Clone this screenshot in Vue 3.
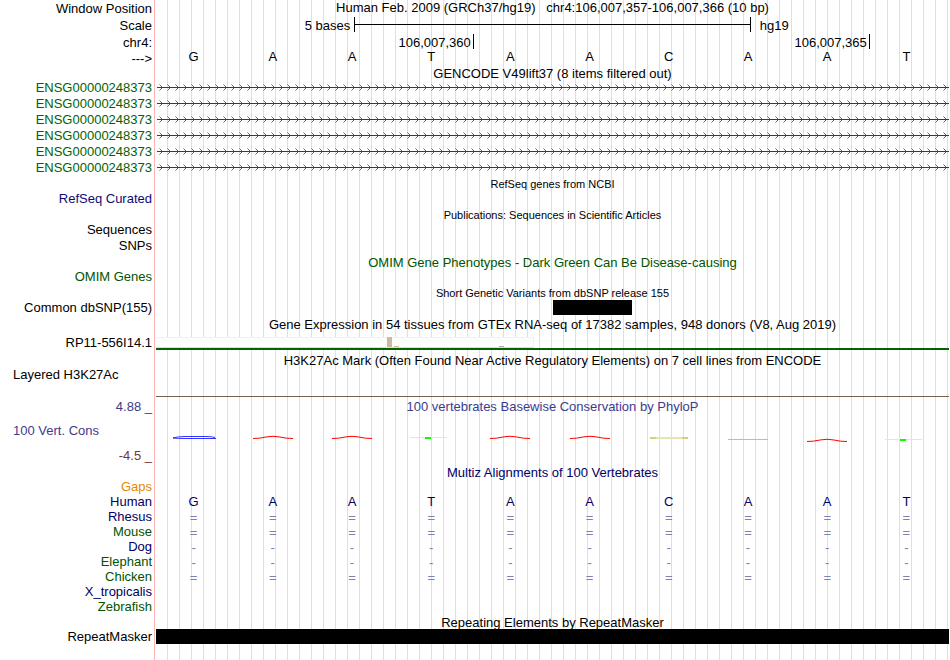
<script setup>
const bases = ['G', 'A', 'A', 'T', 'A', 'A', 'C', 'A', 'A', 'T']
const genes = [1, 2, 3, 4, 5, 6]
const species = [
  { name: 'Rhesus', tone: 'navy', mark: '=' },
  { name: 'Mouse', tone: 'green', mark: '=' },
  { name: 'Dog', tone: 'navy', mark: '-' },
  { name: 'Elephant', tone: 'green', mark: '-' },
  { name: 'Chicken', tone: 'green', mark: '=' },
  { name: 'X_tropicalis', tone: 'navy', mark: '' },
  { name: 'Zebrafish', tone: 'green', mark: '' },
]
const scores = ['g', 'a', 'a', 't', 'a', 'a', 'c', 'flat', 'low', 'tlow']
</script>

<template>
  <main class="browser">
    <div class="row first">
      <span class="label">Window Position</span>
      <h1 class="title">Human Feb. 2009 (GRCh37/hg19) &nbsp; chr4:106,007,357-106,007,366 (10 bp)</h1>
    </div>
    <div class="row ruler">
      <span class="label">Scale</span>
      <div class="scale">
        <span class="scale-name">5 bases</span>
        <span class="bar"></span>
        <span class="scale-db">hg19</span>
      </div>
    </div>
    <div class="row chrom">
      <span class="label">chr4:</span>
      <div class="ticks">
        <span class="tick">106,007,360</span>
        <span class="tick">106,007,365</span>
      </div>
    </div>
    <div class="row arrow">
      <span class="label">---&gt;</span>
      <div class="bases"><span v-for="(b, i) in bases" :key="i">{{ b }}</span></div>
    </div>

    <h2 class="row head gencode"><span class="title">GENCODE V49lift37 (8 items filtered out)</span></h2>
    <div v-for="g in genes" :key="g" class="row gene">
      <span class="label">ENSG00000248373</span>
      <svg class="intron" aria-hidden="true">
        <defs>
          <pattern :id="'chev' + g" width="8" height="16" patternUnits="userSpaceOnUse">
            <path d="M3.5 4.5L6.5 7.5L3.5 10.5" fill="none" stroke="#006400" stroke-width="0.8" />
          </pattern>
        </defs>
        <rect width="100%" height="16" :fill="'url(#chev' + g + ')'" />
        <rect x="1" y="7" width="100%" height="1" fill="#006400" />
      </svg>
    </div>

    <h2 class="row head small"><span class="title">RefSeq genes from NCBI</span></h2>
    <div class="row item"><span class="label blue">RefSeq Curated</span></div>

    <h2 class="row head small"><span class="title">Publications: Sequences in Scientific Articles</span></h2>
    <div class="row item"><span class="label">Sequences</span></div>
    <div class="row item"><span class="label">SNPs</span></div>

    <h2 class="row head omim green"><span class="title">OMIM Gene Phenotypes - Dark Green Can Be Disease-causing</span></h2>
    <div class="row item"><span class="label green">OMIM Genes</span></div>

    <h2 class="row head small"><span class="title">Short Genetic Variants from dbSNP release 155</span></h2>
    <div class="row snp">
      <span class="label">Common dbSNP(155)</span>
      <div class="variants"><i class="variant"></i></div>
    </div>

    <h2 class="row head gtex-head"><span class="title">Gene Expression in 54 tissues from GTEx RNA-seq of 17382 samples, 948 donors (V8, Aug 2019)</span></h2>
    <div class="row gtex">
      <span class="label">RP11-556I14.1</span>
      <div class="expression">
        <svg class="tissues" width="378" height="11" aria-hidden="true">
          <rect width="378" height="11" fill="#f0f0f0" />
          <rect y="1" width="377" height="9" fill="#fdfdfd" />
          <rect y="10" width="378" height="1" fill="#ddd" />
          <rect x="231" width="5" height="10" fill="#cdb79e" />
          <rect x="238" y="9" width="5" height="1" fill="#cdb79e" />
          <rect x="343" y="9" width="5" height="1" fill="#aaa" />
        </svg>
      </div>
    </div>

    <h2 class="row head mark-head"><span class="title">H3K27Ac Mark (Often Found Near Active Regulatory Elements) on 7 cell lines from ENCODE</span></h2>
    <div class="row layered">
      <span class="label wide">Layered H3K27Ac</span>
      <div class="baseline"></div>
    </div>

    <div class="row cons-head">
      <span class="label violet">4.88 _</span>
      <h2 class="title violet">100 vertebrates Basewise Conservation by PhyloP</h2>
    </div>
    <div class="row cons">
      <span class="label wide violet">100 Vert. Cons</span>
      <div class="bases">
        <svg v-for="(s, i) in scores" :key="i" class="score" viewBox="0 0 46 10" aria-hidden="true">
          <g v-if="s === 'g'" fill="none" stroke="#00f" stroke-width="0.8">
            <path d="M2 3Q7 1.5 14 1.5H35Q41 1.5 44 2.5" />
            <path d="M2 3Q7 3.5 14 3.5H45" />
          </g>
          <path v-else-if="s === 'a'" d="M3 3.5Q10 3.5 16 2Q23 0.5 30 2Q36 3.5 43 3.5" fill="none" stroke="red" />
          <path v-else-if="s === 'low'" d="M3 6.5Q10 6.5 16 5Q23 3.5 30 5Q36 6.5 43 6.5" fill="none" stroke="red" />
          <g v-else-if="s === 't'">
            <path d="M2 2.5H39" stroke="#c8f8c8" />
            <rect x="17" y="2" width="6" height="2" fill="#0f0" />
          </g>
          <g v-else-if="s === 'tlow'">
            <path d="M2 4.5H39" stroke="#c8f8c8" />
            <rect x="17" y="4" width="6" height="2" fill="#0f0" />
          </g>
          <g v-else-if="s === 'c'">
            <path d="M4 3H42" stroke="#e4e4b4" stroke-width="2" />
            <path d="M4 3H10M36 3H42" stroke="#bcbc48" />
          </g>
          <path v-else d="M3 4.5H43" stroke="#f6a0a8" />
        </svg>
      </div>
    </div>
    <div class="row item"><span class="label maroon">-4.5 _</span></div>

    <h2 class="row head multiz navy"><span class="title">Multiz Alignments of 100 Vertebrates</span></h2>
    <div class="row align"><span class="label orange">Gaps</span></div>
    <div class="row align navy">
      <span class="label">Human</span>
      <div class="bases"><span v-for="(b, i) in bases" :key="i">{{ b }}</span></div>
    </div>
    <div v-for="s in species" :key="s.name" class="row align">
      <span class="label" :class="s.tone">{{ s.name }}</span>
      <div v-if="s.mark" class="bases marks"><span v-for="(b, i) in bases" :key="i">{{ s.mark }}</span></div>
    </div>

    <h2 class="row head repeat-head"><span class="title">Repeating Elements by RepeatMasker</span></h2>
    <div class="row align">
      <span class="label">RepeatMasker</span>
      <div class="repeat"></div>
    </div>
  </main>
</template>

<style>
body {
  margin: 0;
  background: #fff;
}
</style>

<style scoped>
.browser {
  box-sizing: border-box;
  min-height: 100vh;
  padding-right: 1px;
  font-family: "Liberation Sans", Arial, sans-serif;
  font-size: 13px;
  line-height: 15px;
  color: #000;
  background:
    linear-gradient(#ffb4b4, #ffb4b4) 154px 0 / 1px 100% no-repeat,
    repeating-linear-gradient(90deg, #dcdcf8 0 1px, transparent 1px 12px) 167px 0 / 100% 100% no-repeat;
}
.row {
  box-sizing: border-box;
  display: grid;
  grid-template-columns: 152px minmax(0, 1fr);
  column-gap: 4px;
  height: 16px;
  margin: 0;
  font-size: 13px;
  font-weight: 400;
  white-space: nowrap;
}
.label { grid-column: 1; text-align: right; }
.label.wide { padding-left: 13px; text-align: left; }
.title {
  grid-column: 2;
  margin: 0;
  font-size: 13px;
  font-weight: 400;
  text-align: center;
}
.first { height: 17px; padding-top: 1px; }
.first .title { line-height: 13px; }
.ruler { height: 17px; line-height: 17px; }
.chrom { line-height: 17px; }
.scale {
  display: grid;
  grid-template-columns: 25fr 50fr 25fr;
}
.scale-name { padding-right: 4px; text-align: right; }
.scale-db { padding-left: 9px; }
.bar {
  height: 15px;
  border: solid #000;
  border-width: 0 1px;
  background: linear-gradient(#000, #000) 0 7px / 100% 1px no-repeat;
}
.ticks {
  display: grid;
  grid-template-columns: 4fr 5fr 1fr;
  margin-left: 1px;
}
.tick {
  height: 15px;
  padding-right: 2px;
  border-right: 1px solid #000;
  text-align: right;
}
.bases {
  display: grid;
  grid-template-columns: repeat(10, minmax(0, 1fr));
  margin: 0 3px 0 -2px;
  text-align: center;
}
.arrow { height: 15px; line-height: 17px; }
.arrow .bases { line-height: 13px; }
.head { height: 15px; }
.gencode { padding-top: 1px; }
.small .title { font-size: 11px; line-height: 17px; }
.omim { padding-top: 1px; }
.intron { width: 100%; height: 16px; }
.variants {
  display: grid;
  grid-template-columns: repeat(10, minmax(0, 1fr));
}
.variant { grid-column: 6; background: #000; }
.snp { height: 15px; }
.gtex-head { height: 19px; padding-top: 3px; line-height: 13px; }
.gtex { height: 17px; line-height: 17px; }
.expression {
  display: flex;
  align-items: flex-end;
  height: 14px;
  border-bottom: 2px solid #006400;
}
.mark-head { height: 16px; padding-top: 2px; }
.layered { height: 30px; }
.baseline { border-bottom: 1px solid #786050; }
.cons-head { height: 26px; padding-top: 2px; }
.cons { height: 25px; }
.score { width: 46px; height: 10px; margin: 12px auto 0; }
.multiz { padding-top: 1px; }
.align { height: 15px; }
.marks { color: #7c80b4; line-height: 17px; }
.repeat-head { line-height: 17px; }
.repeat { background: #000; }
.blue { color: #0c0c78; }
.navy { color: #000064; }
.green { color: #005400; }
.gene .label { color: #006400; }
.violet { color: #3c3c8c; }
.maroon { color: #783232; }
.orange { color: #e68a00; }
</style>
